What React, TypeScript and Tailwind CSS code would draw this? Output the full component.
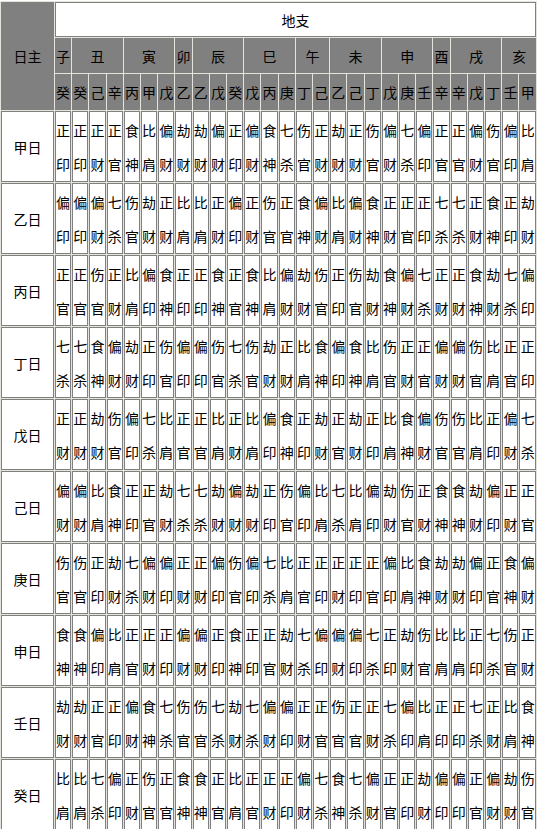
const STEMS = "甲乙丙丁戊己庚辛壬癸";

const branches: { name: string; hidden: string[] }[] = [
  { name: "子", hidden: ["癸"] },
  { name: "丑", hidden: ["癸", "己", "辛"] },
  { name: "寅", hidden: ["丙", "甲", "戊"] },
  { name: "卯", hidden: ["乙"] },
  { name: "辰", hidden: ["乙", "戊", "癸"] },
  { name: "巳", hidden: ["戊", "丙", "庚"] },
  { name: "午", hidden: ["丁", "己"] },
  { name: "未", hidden: ["乙", "己", "丁"] },
  { name: "申", hidden: ["戊", "庚", "壬"] },
  { name: "酉", hidden: ["辛"] },
  { name: "戌", hidden: ["辛", "戊", "丁"] },
  { name: "亥", hidden: ["壬", "甲"] },
];

// the source table really says 申日 for the 8th row
const dayMasters = ["甲日", "乙日", "丙日", "丁日", "戊日", "己日", "庚日", "申日", "壬日", "癸日"];

const GODS = [
  ["比肩", "劫财"],
  ["食神", "伤官"],
  ["偏财", "正财"],
  ["七杀", "正官"],
  ["偏印", "正印"],
];

const tenGod = (day: number, stem: string) => {
  const s = STEMS.indexOf(stem);
  const rel = (Math.floor(s / 2) - Math.floor(day / 2) + 5) % 5;
  return GODS[rel][s % 2 === day % 2 ? 0 : 1];
};

const hiddenStems = branches.flatMap((b) => b.hidden);

const cell = "border border-[#808080] p-0 text-center align-middle";

export default function App() {
  return (
    <div
      className="min-h-screen bg-white pt-px text-black antialiased"
      style={{ fontFamily: '"Noto Sans CJK SC", "Noto Sans CJK TC", sans-serif' }}
    >
      <table className="w-[537px] table-fixed border-separate border-spacing-[1px] bg-[#e4e4dc] text-[14px] leading-none">
        <colgroup>
          <col className="w-[53px]" />
          {hiddenStems.map((_, i) => (
            <col key={i} />
          ))}
        </colgroup>
        <thead>
          <tr>
            <td rowSpan={3} className={`${cell} bg-[#808080]`}>
              日主
            </td>
            <td colSpan={28} className={`${cell} h-[35px] bg-white`}>
              地支
            </td>
          </tr>
          <tr>
            {branches.map((b) => (
              <td
                key={b.name}
                colSpan={b.hidden.length}
                className={`${cell} h-[35px] bg-[#808080]`}
              >
                {b.name}
              </td>
            ))}
          </tr>
          <tr>
            {hiddenStems.map((s, i) => (
              <td key={i} className={`${cell} h-[36px] bg-[#808080]`}>
                {s}
              </td>
            ))}
          </tr>
        </thead>
        <tbody>
          {dayMasters.map((dm, d) => (
            <tr key={dm}>
              <td className={`${cell} h-[71px] bg-white`}>{dm}</td>
              {hiddenStems.map((s, i) => {
                const god = tenGod(d, s);
                return (
                  <td key={i} className={`${cell} bg-white`}>
                    <div className="flex flex-col items-center leading-[34px]">
                      <span>{god[0]}</span>
                      <span>{god[1]}</span>
                    </div>
                  </td>
                );
              })}
            </tr>
          ))}
        </tbody>
      </table>
    </div>
  );
}
